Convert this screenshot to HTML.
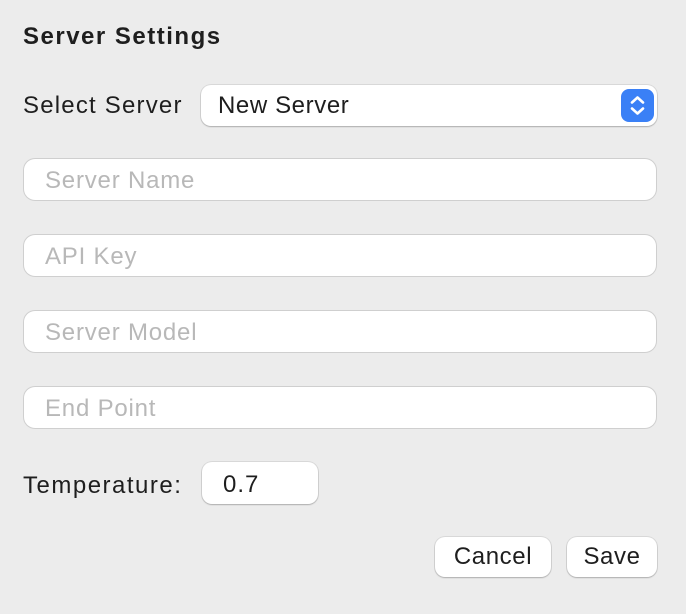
<!DOCTYPE html>
<html><head><style>
body{margin:0;width:686px;height:614px;background:#ececec;font-family:"Liberation Sans",sans-serif;position:relative;overflow:hidden;color:#1e1e1e;font-size:24px;letter-spacing:1px}
.a{position:absolute}
.t{left:23px;top:23px;font-size:24px;font-weight:bold;letter-spacing:1.5px}
.box{background:#fff;border-radius:10px;box-shadow:0 0 0 1px rgba(0,0,0,.08),0 1px 1.5px rgba(0,0,0,.2)}
.f{left:24px;width:632px;height:41px;border-radius:11px;background:#fff;box-shadow:0 0 0 1px rgba(0,0,0,.12)}
.f span{position:absolute;left:21px;top:8px;color:#b8b8b8;letter-spacing:0.8px}
.btn{text-align:center;line-height:40px;letter-spacing:0.6px}
</style></head><body>
<div class="a t">Server Settings</div>
<div class="a" style="left:23px;top:92px;letter-spacing:1.2px">Select Server</div>
<div class="a box" style="left:201px;top:85px;width:456px;height:41px">
 <span class="a" style="left:17px;top:7px;letter-spacing:0.6px">New Server</span>
 <div class="a" style="left:420px;top:4px;width:33px;height:33px;border-radius:8px;background:#3a80f6">
  <svg width="33" height="33" viewBox="0 0 33 33"><path d="M11 13.5l5.5-5 5.5 5M11 19.5l5.5 5 5.5-5" fill="none" stroke="#fff" stroke-width="2.6" stroke-linecap="round" stroke-linejoin="round"/></svg>
 </div>
</div>
<div class="a f" style="top:159px"><span>Server Name</span></div>
<div class="a f" style="top:235px"><span>API Key</span></div>
<div class="a f" style="top:311px"><span>Server Model</span></div>
<div class="a f" style="top:387px"><span>End Point</span></div>
<div class="a" style="left:23px;top:472px;letter-spacing:1.5px">Temperature:</div>
<div class="a box" style="left:202px;top:462px;width:116px;height:42px"><span class="a" style="left:21px;top:9px">0.7</span></div>
<div class="a box btn" style="left:435px;top:537px;width:116px;height:40px">Cancel</div>
<div class="a box btn" style="left:567px;top:537px;width:90px;height:40px">Save</div>
</body></html>
